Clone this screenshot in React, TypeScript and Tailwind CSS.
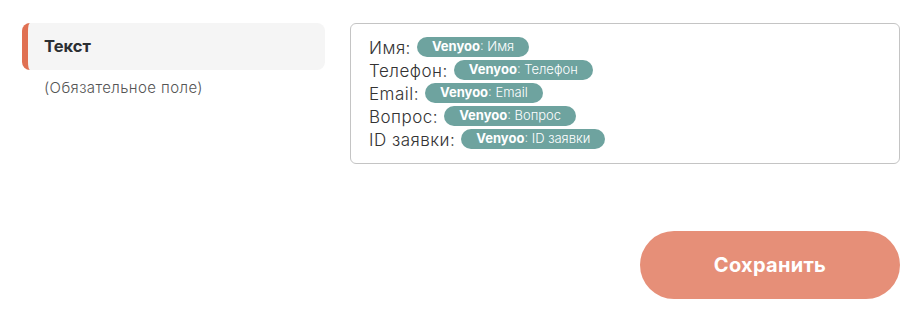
const fields = [
  { label: 'Имя:', tag: 'Имя' },
  { label: 'Телефон:', tag: 'Телефон' },
  { label: 'Email:', tag: 'Email' },
  { label: 'Вопрос:', tag: 'Вопрос' },
  { label: 'ID заявки:', tag: 'ID заявки' },
]

export default function App() {
  return (
    <div className="w-[923px] h-[322px] bg-white font-['Inter',sans-serif] relative">
      <div className="flex pt-[23px] pl-[22px] pr-[23px] gap-[25px]">
        {/* left column */}
        <div className="w-[303px] flex flex-col">
          <div className="h-[47px] flex items-center bg-[#f5f5f5] rounded-[8px] border-l-[6px] border-[#e07052] pl-[16px]">
            <span className="text-[16.5px] font-bold text-[#2b2f33]">Текст</span>
          </div>
          <div className="pl-[22px] mt-[7px] text-[15px] tracking-[0.4px] text-[#555] font-light">(Обязательное поле)</div>
        </div>

        {/* editor */}
        <div className="flex-1 h-[141px] border border-[#c4c4c4] rounded-[6px] pl-[18px] pt-[13px]">
          {fields.map((f) => (
            <div key={f.label} className="flex items-center h-[23px] text-[17px] tracking-[0.5px] font-light text-[#333] leading-[23px]">
              <span>{f.label}</span>
              <span className="ml-[6px] -mt-[4px] h-[20px] inline-flex items-center px-[15px] rounded-full bg-[#6ea39f] text-white text-[13px] tracking-normal leading-none">
                <b className="font-bold">Venyoo</b>
                <span>: {f.tag}</span>
              </span>
            </div>
          ))}
        </div>
      </div>

      <div className="flex justify-end pr-[23px] mt-[67px]">
        <button className="w-[260px] h-[68px] rounded-full bg-[#e68f78] text-white text-[20px] tracking-[0.3px] font-bold">
          Сохранить
        </button>
      </div>
    </div>
  )
}
